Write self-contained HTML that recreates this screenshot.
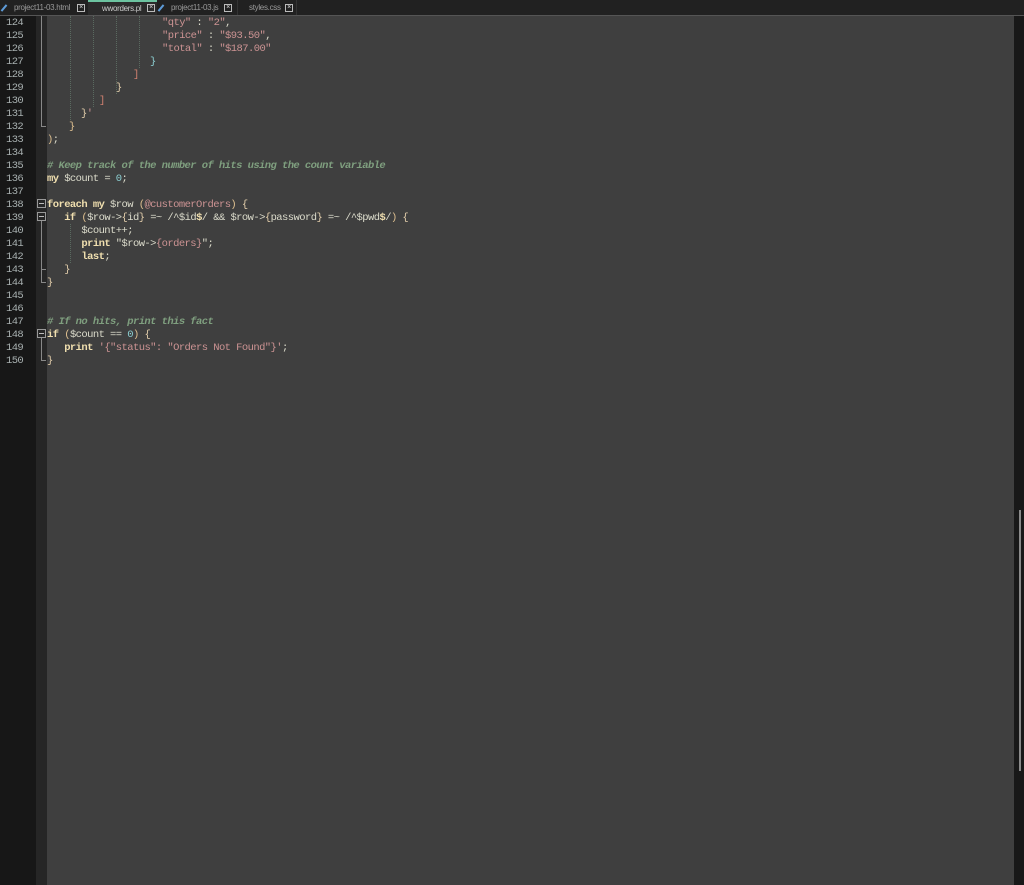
<!DOCTYPE html>
<html><head><meta charset="utf-8"><style>
*{margin:0;padding:0;box-sizing:border-box}
body{width:1024px;height:885px;background:#3f3f3f;position:relative;overflow:hidden;font-family:"Liberation Mono",monospace}
#tabs{position:absolute;left:0;top:0;width:1024px;height:16px;background:#212121;border-bottom:1px solid #555}
.tab{position:absolute;top:0;height:15px;font:8px "Liberation Sans",sans-serif;color:#9a9a9a;line-height:15px;letter-spacing:-0.3px}
.tab .x{position:absolute;top:4px;width:8px;height:8px;border:1px solid #bbb;font-size:7px;line-height:6px;text-align:center;color:#ddd}
.pen{position:absolute;top:4px;left:3px;width:2px;height:8px;background:#5d9bd8;transform:rotate(40deg)}
#gut{position:absolute;left:0;top:16px;width:36px;height:869px;background:#171717}
#fold{position:absolute;left:36px;top:16px;width:11px;height:869px;background:#262626}
#sb{position:absolute;left:1014px;top:16px;width:10px;height:869px;background:#181818}
#thumb{position:absolute;left:1019px;top:510px;width:2px;height:261px;background:#8a8a8a}
.n{position:absolute;left:6px;font-size:10.5px;letter-spacing:-0.6px;color:#a8b0b0;height:13px;line-height:13px;margin-top:1px}
.l{position:absolute;font-size:10.5px;letter-spacing:-0.57px;height:13px;line-height:13px;white-space:pre;color:#dcdccc;margin-top:1px}
.s{color:#cc9393}.k{color:#f0dfaf;font-weight:bold}.c{color:#7f9f7f;font-style:italic;font-weight:bold}.nm{color:#8cd0d3}.b{color:#e3ceab}.r{color:#d08070}.v{color:#dfc090}
.g{position:absolute;border-left:1px dotted #5a6a60}
.fl{position:absolute;background:#888}
.fb{position:absolute;width:9px;height:9px;border:1px solid #999;background:#262626}
.fb:after{content:"";position:absolute;left:1px;top:3px;width:5px;height:1px;background:#bbb}
</style></head><body>
<div id="tabs">
 <div class="tab" style="left:0;width:88px"><span class="pen"></span><span style="position:absolute;left:14px">project11-03.html</span><span class="x" style="left:77px">×</span></div>
 <div class="tab" style="left:88px;width:69px;background:#2b2b2b;border-top:2px solid #6cc3a0;line-height:13px;color:#ccc"><span style="position:absolute;left:14px">wworders.pl</span><span class="x" style="left:59px;top:2px">×</span></div>
 <div class="tab" style="left:157px;width:80px"><span class="pen"></span><span style="position:absolute;left:14px">project11-03.js</span><span class="x" style="left:67px">×</span></div>
 <div class="tab" style="left:237px;width:60px;border-left:1px solid #333;border-right:1px solid #333"><span style="position:absolute;left:11px">styles.css</span><span class="x" style="left:47px">×</span></div>
</div>
<div id="gut"></div><div id="fold"></div><div id="sb"></div><div id="thumb"></div>

<div class="n" style="top:16px">124</div><div class="n" style="top:29px">125</div><div class="n" style="top:42px">126</div><div class="n" style="top:55px">127</div><div class="n" style="top:68px">128</div><div class="n" style="top:81px">129</div><div class="n" style="top:94px">130</div><div class="n" style="top:107px">131</div><div class="n" style="top:120px">132</div><div class="n" style="top:133px">133</div><div class="n" style="top:146px">134</div><div class="n" style="top:159px">135</div><div class="n" style="top:172px">136</div><div class="n" style="top:185px">137</div><div class="n" style="top:198px">138</div><div class="n" style="top:211px">139</div><div class="n" style="top:224px">140</div><div class="n" style="top:237px">141</div><div class="n" style="top:250px">142</div><div class="n" style="top:263px">143</div><div class="n" style="top:276px">144</div><div class="n" style="top:289px">145</div><div class="n" style="top:302px">146</div><div class="n" style="top:315px">147</div><div class="n" style="top:328px">148</div><div class="n" style="top:341px">149</div><div class="n" style="top:354px">150</div>

<div class="g" style="left:70px;top:16px;height:104px"></div>
<div class="g" style="left:93px;top:16px;height:91px"></div>
<div class="g" style="left:116px;top:16px;height:78px"></div>
<div class="g" style="left:139px;top:16px;height:52px"></div>
<div class="g" style="left:70px;top:224px;height:39px"></div>
<div class="fl" style="left:41px;top:16px;width:1px;height:110px"></div><div class="fl" style="left:41px;top:126px;width:5px;height:1px"></div>
<div class="fb" style="left:37px;top:199px"></div>
<div class="fb" style="left:37px;top:212px"></div>
<div class="fl" style="left:41px;top:221px;width:1px;height:62px"></div><div class="fl" style="left:41px;top:269px;width:5px;height:1px"></div><div class="fl" style="left:41px;top:282px;width:5px;height:1px"></div>
<div class="fb" style="left:37px;top:329px"></div>
<div class="fl" style="left:41px;top:338px;width:1px;height:22px"></div><div class="fl" style="left:41px;top:360px;width:5px;height:1px"></div>

<div class="l" style="left:162px;top:16px"><span class="s">"qty"</span> : <span class="s">"2"</span>,</div>
<div class="l" style="left:162px;top:29px"><span class="s">"price"</span> : <span class="s">"$93.50"</span>,</div>
<div class="l" style="left:162px;top:42px"><span class="s">"total"</span> : <span class="s">"$187.00"</span></div>
<div class="l" style="left:150px;top:55px"><span class="nm">}</span></div>
<div class="l" style="left:133px;top:68px"><span class="r">]</span></div>
<div class="l" style="left:116px;top:81px"><span class="b">}</span></div>
<div class="l" style="left:99px;top:94px"><span class="r">]</span></div>
<div class="l" style="left:81px;top:107px"><span class="b">}</span><span class="s">'</span></div>
<div class="l" style="left:69px;top:120px"><span class="v">}</span></div>
<div class="l" style="left:47px;top:133px"><span class="v">)</span>;</div>
<div class="l" style="left:47px;top:159px"><span class="c"># Keep track of the number of hits using the count variable</span></div>
<div class="l" style="left:47px;top:172px"><span class="k">my</span> $count = <span class="nm">0</span>;</div>
<div class="l" style="left:47px;top:198px"><span class="k">foreach</span> <span class="k">my</span> $row <span class="v">(</span><span class="s">@customerOrders</span><span class="v">)</span> <span class="b">{</span></div>
<div class="l" style="left:47px;top:211px">   <span class="k">if</span> <span class="v">(</span>$row-&gt;<span class="b">{</span>id<span class="b">}</span> =~ /^$id<span class="k">$</span>/ &amp;&amp; $row-&gt;<span class="b">{</span>password<span class="b">}</span> =~ /^$pwd<span class="k">$</span>/<span class="v">)</span> <span class="b">{</span></div>
<div class="l" style="left:47px;top:224px">      $count++;</div>
<div class="l" style="left:47px;top:237px">      <span class="k">print</span> "$row-&gt;<span class="s">{orders}</span>";</div>
<div class="l" style="left:47px;top:250px">      <span class="k">last</span>;</div>
<div class="l" style="left:47px;top:263px">   <span class="b">}</span></div>
<div class="l" style="left:47px;top:276px"><span class="b">}</span></div>
<div class="l" style="left:47px;top:315px"><span class="c"># If no hits, print this fact</span></div>
<div class="l" style="left:47px;top:328px"><span class="k">if</span> <span class="v">(</span>$count == <span class="nm">0</span><span class="v">)</span> <span class="b">{</span></div>
<div class="l" style="left:47px;top:341px">   <span class="k">print</span> <span class="s">'{"status": "Orders Not Found"}'</span>;</div>
<div class="l" style="left:47px;top:354px"><span class="b">}</span></div>
</body></html>
